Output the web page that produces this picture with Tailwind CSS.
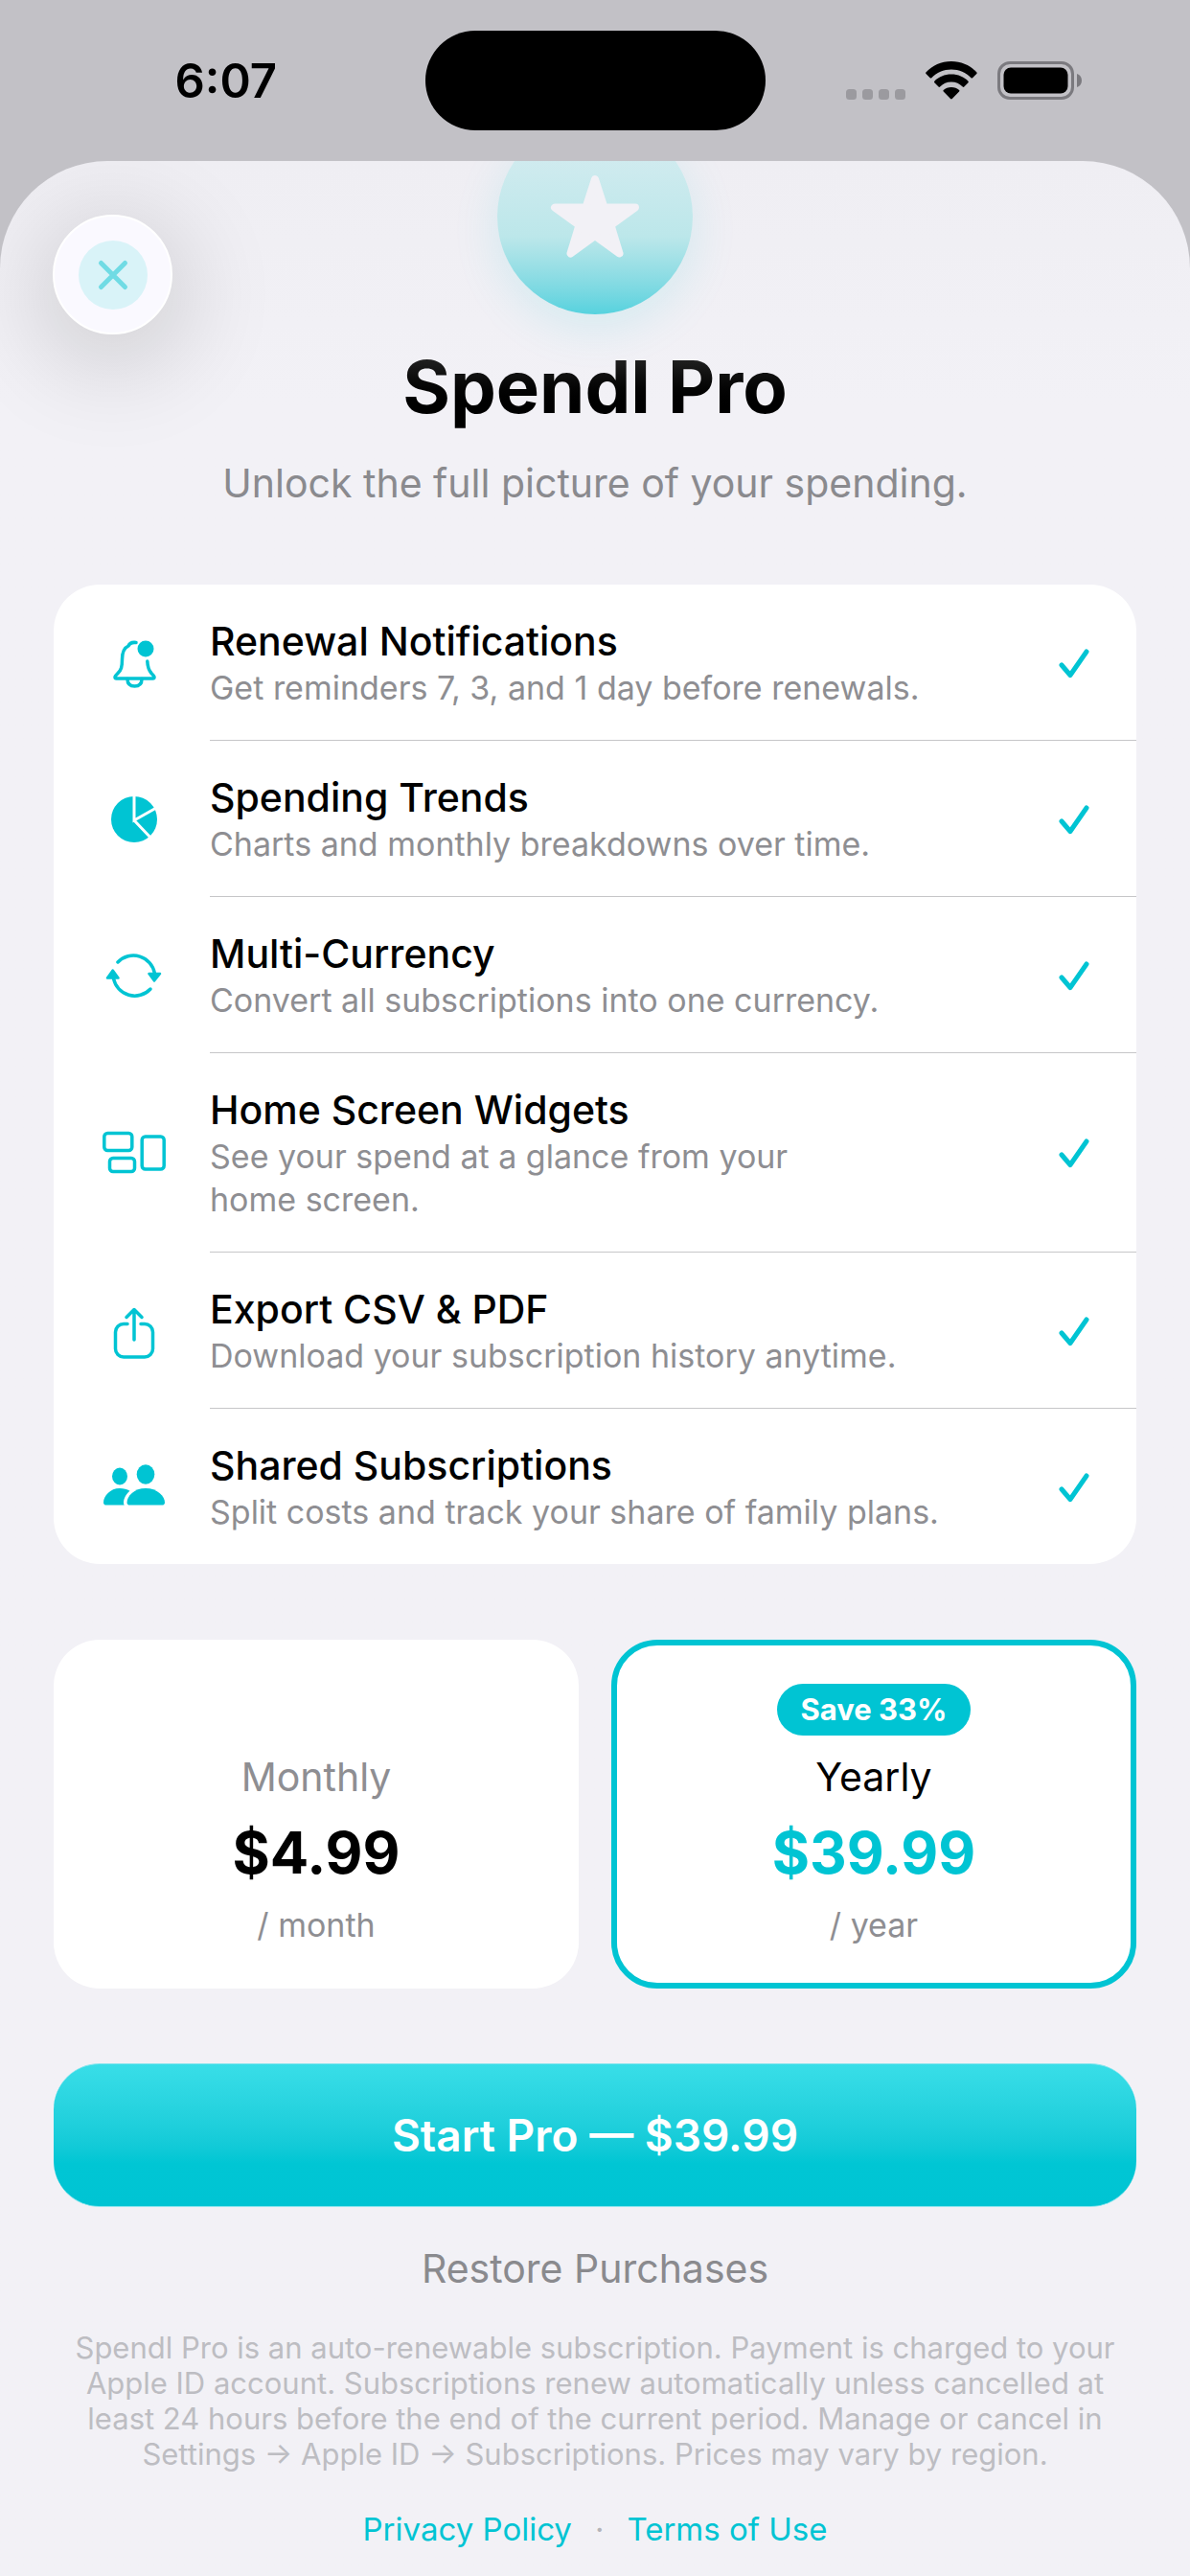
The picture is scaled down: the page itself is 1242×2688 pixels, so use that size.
<!DOCTYPE html>
<html lang="en">
<head>
    <meta charset="UTF-8">
    <meta name="viewport" content="width=device-width, initial-scale=1.0">
    <title>Spendl Pro</title>
    <script src="https://cdn.jsdelivr.net/npm/@tailwindcss/browser@4"></script>
</head>
<body class="bg-[#c2c1c6] min-h-screen flex flex-col font-['Inter',sans-serif] text-black">

<!-- Status bar -->
<header class="flex h-42 items-start pt-8">
    <div class="flex h-26 flex-1 items-center justify-center pl-7">
        <span class="text-[49px] leading-none font-semibold">6:07</span>
    </div>
    <div class="h-26 w-[355px] rounded-full bg-black"></div>
    <div class="flex h-26 flex-1 items-center justify-center gap-[21px] pr-7">
        <svg class="h-10 w-[62px]" viewBox="0 0 62 40" fill="#9b9a9f">
            <rect x="0" y="29" width="11" height="11" rx="3.5"/>
            <rect x="17" y="29" width="11" height="11" rx="3.5"/>
            <rect x="34" y="29" width="11" height="11" rx="3.5"/>
            <rect x="51" y="29" width="11" height="11" rx="3.5"/>
        </svg>
        <svg class="h-10 w-[54px]" viewBox="0 0 54 40">
            <path d="M0.4 11.6C7 4.3 16.300 0 26.900 0s19.900 4.300 26.500 11.600c.4.5.4 1-.1 1.400l-4.200 4.200c-.5.5-1.100.5-1.600 0C42.200 11.700 35 8.500 26.900 8.500S11.600 11.700 6.300 17.200c-.5.5-1.100.5-1.600 0L.5 13c-.5-.400-.5-.900-.1-1.400z"/>
            <path d="M9.300 20.800c4.300-4.500 10.600-7.200 17.600-7.200s13.300 2.700 17.600 7.200c.5.5.5 1 0 1.500l-4.200 4.200c-.5.5-1.100.5-1.600 0-3-3.100-7.100-5-11.800-5s-8.800 1.900-11.800 5c-.5.5-1.100.5-1.600 0l-4.200-4.200c-.5-.5-.5-1 0-1.500z"/>
            <path d="M18.700 30.100c2.100-2 5-3.100 8.200-3.100s6.100 1.100 8.200 3.100c.5.5.5 1 0 1.500l-7.300 7.400c-.6.600-1.200.600-1.800 0l-7.300-7.400c-.5-.5-.5-1 0-1.500z"/>
        </svg>
        <svg class="h-10 w-[89px]" viewBox="0 0 89 40">
            <rect x="1.500" y="1.500" width="77" height="37" rx="11.500" fill="none" stroke="#7b7a7f" stroke-width="3"/>
            <rect x="6.500" y="6.500" width="67" height="27" rx="7.500"/>
            <path d="M83 13c3 1 5 3.500 5 7s-2 6-5 7z" fill="#7b7a7f"/>
        </svg>
    </div>
</header>

<main class="relative flex-1 overflow-hidden rounded-t-[112px] bg-[#f2f1f6] bg-linear-to-b from-[#efeef3] to-[#f2f1f6] to-10% px-14">

    <button aria-label="Close" class="absolute top-14 left-[55px] flex size-[125px] items-center justify-center rounded-full border-2 border-white bg-[#faf9ff] shadow-[0_20px_100px_16px_rgba(0,0,0,0.14)]">
        <span class="flex size-18 items-center justify-center rounded-full bg-[#d9f3f8]">
            <svg class="size-9" viewBox="0 0 36 36" fill="none" stroke="#70dbe4" stroke-width="5" stroke-linecap="round">
                <path d="M5.500 5.500l25 25M30.500 5.500l-25 25"/>
            </svg>
        </span>
    </button>

    <!-- Title -->
    <div class="flex flex-col items-center">
        <div class="-mt-11 flex size-51 items-center justify-center rounded-full bg-linear-to-b from-[#d0ebef] from-20% via-[#bce7ea] via-60% to-[#55d2de] shadow-[0_14px_50px_0_rgba(0,199,214,0.12)]">
            <svg class="size-24" viewBox="0 0 96 96" fill="#f2f1f6" stroke="#f2f1f6" stroke-width="8" stroke-linejoin="round">
                <path d="M48 9L57.500 38.500H90L64.500 57L73.500 86.500L48 68L22.500 86.500L31.500 57L6 38.500H38.500Z"/>
            </svg>
        </div>
        <h1 class="mt-[30px] bg-linear-to-b from-[#333] to-black to-80% bg-clip-text text-[76px] leading-[90px] font-bold text-transparent">Spendl Pro</h1>
        <p class="mt-[30px] text-[41px] leading-[52px] text-[#8a8a8e]">Unlock the full picture of your spending.</p>
    </div>

    <!-- Features -->
    <ul class="mt-20 overflow-hidden rounded-[48px] bg-white pl-[51px]">
        <li class="flex items-center gap-[46px]">
            <svg class="size-[66px] shrink-0" viewBox="0 0 66 66" fill="none" stroke="#00c4d3" stroke-width="3.5" stroke-linecap="round" stroke-linejoin="round">
                <path d="M35 11.500C31 11 28 12.500 27 15C22.500 17 20.500 22 20.500 29C20.500 37 19.500 40 16 43.500C14 45.500 13 46.500 13 47.500C13 48.500 13.500 49 14.500 49H52.500C53.500 49 54 48.500 54 47.500C54 46.500 53 45.500 51 43.500C48 40 47 36 46.800 31"/>
                <path d="M26 49.500C26 54.500 29 57 33.500 57C38 57 41 54.500 41 49.500"/>
                <circle cx="45" cy="18" r="8.500" fill="#00c4d3" stroke="none"/>
            </svg>
            <div class="flex flex-1 items-center justify-between border-b border-[#c6c6c8] pt-[33px] pr-12 pb-8">
                <div>
                    <h2 class="text-[41px] leading-[52px] font-medium">Renewal Notifications</h2>
                    <p class="text-[34px] leading-[45px] text-[#8e8e92]">Get reminders 7, 3, and 1 day before renewals.</p>
                </div>
                <svg class="h-8 w-9 shrink-0" viewBox="0 0 36 32" fill="none" stroke="#00c4d3" stroke-width="5" stroke-linecap="round" stroke-linejoin="round"><path d="M6 18L15 28.500L32 4"/></svg>
            </div>
        </li>
        <li class="flex items-center gap-[46px]">
            <svg class="size-[66px] shrink-0" viewBox="0 0 66 66" fill="none" stroke="#fff" stroke-width="3">
                <circle cx="33" cy="33" r="24" fill="#00c4d3" stroke="none"/>
                <path d="M33 8V34L57 20.500M33 34L52 54"/>
            </svg>
            <div class="flex flex-1 items-center justify-between border-b border-[#c6c6c8] pt-[33px] pr-12 pb-8">
                <div>
                    <h2 class="text-[41px] leading-[52px] font-medium">Spending Trends</h2>
                    <p class="text-[34px] leading-[45px] text-[#8e8e92]">Charts and monthly breakdowns over time.</p>
                </div>
                <svg class="h-8 w-9 shrink-0" viewBox="0 0 36 32" fill="none" stroke="#00c4d3" stroke-width="5" stroke-linecap="round" stroke-linejoin="round"><path d="M6 18L15 28.500L32 4"/></svg>
            </div>
        </li>
        <li class="flex items-center gap-[46px]">
            <svg class="size-[66px] shrink-0" viewBox="0 0 66 66" fill="none" stroke="#00c4d3" stroke-width="3.5" stroke-linecap="round" stroke-linejoin="round">
                <path d="M16 19A22.500 22.500 0 0 1 54.500 31"/>
                <path d="M11.500 36A22.500 22.500 0 0 0 50 47"/>
                <path d="M48.500 31H60L54 38.500ZM5 35.500H16.500L10.700 27.500Z" fill="#00c4d3" stroke-width="2.5"/>
            </svg>
            <div class="flex flex-1 items-center justify-between border-b border-[#c6c6c8] pt-[33px] pr-12 pb-8">
                <div>
                    <h2 class="text-[41px] leading-[52px] font-medium">Multi-Currency</h2>
                    <p class="text-[34px] leading-[45px] text-[#8e8e92]">Convert all subscriptions into one currency.</p>
                </div>
                <svg class="h-8 w-9 shrink-0" viewBox="0 0 36 32" fill="none" stroke="#00c4d3" stroke-width="5" stroke-linecap="round" stroke-linejoin="round"><path d="M6 18L15 28.500L32 4"/></svg>
            </div>
        </li>
        <li class="flex items-center gap-[46px]">
            <svg class="size-[66px] shrink-0" viewBox="0 0 66 66" fill="none" stroke="#00c4d3" stroke-width="3.5">
                <rect x="1.800" y="12.500" width="29" height="18" rx="3.500"/>
                <rect x="7.500" y="38.500" width="26" height="14" rx="3.500"/>
                <rect x="41.200" y="16" width="23" height="34" rx="3.500"/>
            </svg>
            <div class="flex flex-1 items-center justify-between border-b border-[#c6c6c8] pt-[33px] pr-12 pb-8">
                <div>
                    <h2 class="text-[41px] leading-[52px] font-medium">Home Screen Widgets</h2>
                    <p class="text-[34px] leading-[45px] text-[#8e8e92]">See your spend at a glance from your<br>home screen.</p>
                </div>
                <svg class="h-8 w-9 shrink-0" viewBox="0 0 36 32" fill="none" stroke="#00c4d3" stroke-width="5" stroke-linecap="round" stroke-linejoin="round"><path d="M6 18L15 28.500L32 4"/></svg>
            </div>
        </li>
        <li class="flex items-center gap-[46px]">
            <svg class="size-[66px] shrink-0" viewBox="0 0 66 66" fill="none" stroke="#00c4d3" stroke-width="3.5" stroke-linecap="round" stroke-linejoin="round">
                <path d="M26 25.500H22A8.500 8.500 0 0 0 13.500 34V51.500A8.500 8.500 0 0 0 22 60H44A8.500 8.500 0 0 0 52.500 51.500V34A8.500 8.500 0 0 0 44 25.500H40"/>
                <path d="M33 42V10.500M25 18.500L33 10.500L41 18.500"/>
            </svg>
            <div class="flex flex-1 items-center justify-between border-b border-[#c6c6c8] pt-[33px] pr-12 pb-8">
                <div>
                    <h2 class="text-[41px] leading-[52px] font-medium">Export CSV &amp; PDF</h2>
                    <p class="text-[34px] leading-[45px] text-[#8e8e92]">Download your subscription history anytime.</p>
                </div>
                <svg class="h-8 w-9 shrink-0" viewBox="0 0 36 32" fill="none" stroke="#00c4d3" stroke-width="5" stroke-linecap="round" stroke-linejoin="round"><path d="M6 18L15 28.500L32 4"/></svg>
            </div>
        </li>
        <li class="flex items-center gap-[46px]">
            <svg class="size-[66px] shrink-0" viewBox="0 0 66 66" fill="#00c4d3">
                <ellipse cx="18" cy="22.500" rx="8" ry="9"/>
                <ellipse cx="45" cy="20.500" rx="9.300" ry="10.300"/>
                <path d="M4 52.600C2 52.600 1 51.500 1 50C1 43 8 35 18 35C22 35 25.500 36 28.500 37.800C24.500 41 22 46 22 50C22 51 22.300 52 22.800 52.600Z"/>
                <path d="M28.500 52.600C26.500 52.600 25.500 51.500 25.500 50C25.500 43 33 35 45 35C57 35 65 43 65 50C65 51.500 64 52.600 62 52.600Z"/>
            </svg>
            <div class="flex flex-1 items-center justify-between pt-[33px] pr-12 pb-8">
                <div>
                    <h2 class="text-[41px] leading-[52px] font-medium">Shared Subscriptions</h2>
                    <p class="text-[34px] leading-[45px] text-[#8e8e92]">Split costs and track your share of family plans.</p>
                </div>
                <svg class="h-8 w-9 shrink-0" viewBox="0 0 36 32" fill="none" stroke="#00c4d3" stroke-width="5" stroke-linecap="round" stroke-linejoin="round"><path d="M6 18L15 28.500L32 4"/></svg>
            </div>
        </li>
    </ul>

    <!-- Plans -->
    <div class="mt-[79px] grid grid-cols-2 gap-[34px]">
        <button class="flex flex-col items-center justify-end gap-[17px] rounded-[48px] bg-white py-11">
            <span class="text-[41px] leading-[52px] text-[#8e8e92]">Monthly</span>
            <span class="text-[60px] leading-[72px] font-bold">$4.99</span>
            <span class="text-[34px] leading-[45px] text-[#8e8e92]">/ month</span>
        </button>
        <button class="flex flex-col items-center gap-[17px] rounded-[48px] border-[6px] border-[#00c4d3] bg-white pt-10 pb-[38px]">
            <span class="rounded-full bg-[#00c4d3] px-6 text-[31px] leading-[54px] font-bold text-white">Save 33%</span>
            <span class="text-[41px] leading-[52px]">Yearly</span>
            <span class="text-[60px] leading-[72px] font-bold text-[#00c4d3]">$39.99</span>
            <span class="text-[34px] leading-[45px] text-[#8e8e92]">/ year</span>
        </button>
    </div>

    <button class="mt-[78px] w-full rounded-[48px] border-y border-[#8ce6ee] bg-linear-to-b from-[#38dee8] via-[#00c6d4] via-70% to-[#00c4d3] py-11 text-[46px] leading-[60px] font-semibold text-white">Start Pro — $39.99</button>

    <!-- Footer -->
    <div class="flex flex-col items-center">
        <button class="mt-[38px] text-[41px] leading-[52px] text-[#8a8a8e]">Restore Purchases</button>
        <p class="mt-[38px] text-center text-[31px] leading-[37px] text-[#bdbdc2]">Spendl Pro is an auto-renewable subscription. Payment is charged to your<br>Apple ID account. Subscriptions renew automatically unless cancelled at<br>least 24 hours before the end of the current period. Manage or cancel in<br>Settings → Apple ID → Subscriptions. Prices may vary by region.</p>
        <nav class="mt-[38px] flex gap-6 text-[33px] leading-[45px] text-[#00c4d3]">
            <a href="#">Privacy Policy</a>
            <span class="text-[#b4b4b9]">·</span>
            <a href="#">Terms of Use</a>
        </nav>
    </div>
</main>

</body>
</html>
